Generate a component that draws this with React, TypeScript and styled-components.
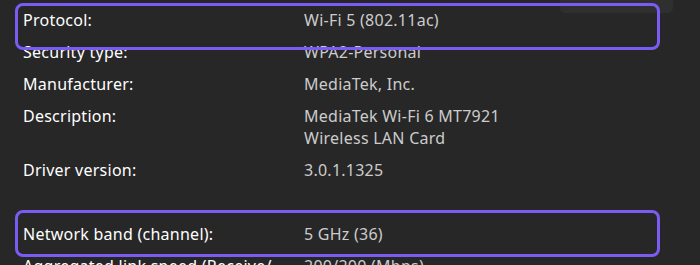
import React from "react";
import styled, { createGlobalStyle } from "styled-components";

const GlobalStyle = createGlobalStyle`
  html, body {
    margin: 0;
    padding: 0;
    background: #272727;
  }
  body {
    width: 700px;
    height: 265px;
    overflow: hidden;
    font-family: "Noto Sans", "Open Sans", sans-serif;
    -webkit-font-smoothing: antialiased;
  }
`;

const Page = styled.div`
  position: relative;
  width: 700px;
  height: 265px;
  overflow: hidden;
  background: #272727;
`;

const TopBar = styled.div`
  display: flex;
  justify-content: flex-end;
  align-items: flex-end;
  height: 13px;
  padding-right: 27px;
`;

const CopyButton = styled.button`
  flex-shrink: 0;
  width: 113px;
  height: 34px;
  border: none;
  border-radius: 5px;
  background: #2f2f2f;
  color: #ffffff;
  font-family: "Noto Sans", "Open Sans", sans-serif;
  font-size: 16px;
  letter-spacing: 0.25px;
  line-height: 22px;
  display: flex;
  align-items: center;
  justify-content: center;
  padding: 0 0 12px 0;
`;

const List = styled.div`
  display: flex;
  flex-direction: column;
  gap: 42px;
  margin-top: -4px;
  padding-left: 23px;
`;

const Group = styled.div`
  display: flex;
  flex-direction: column;
  gap: 10px;
`;

const Row = styled.div`
  display: grid;
  grid-template-columns: 281px 1fr;
  font-size: 16px;
  letter-spacing: 0.25px;
  line-height: 22px;
`;

const Label = styled.span`
  color: #ffffff;
`;

const Value = styled.span`
  color: #cccccc;
  white-space: pre-line;
`;

const Highlight = styled.div<{ $top: number }>`
  position: absolute;
  left: 15px;
  top: ${(p) => p.$top}px;
  width: 645px;
  height: 47px;
  box-sizing: border-box;
  border: 3px solid #7a5cf2;
  border-radius: 8px;
  pointer-events: none;
`;

type Item = { label: string; value: string };

const groupA: Item[] = [
  { label: "Protocol:", value: "Wi-Fi 5 (802.11ac)" },
  { label: "Security type:", value: "WPA2-Personal" },
  { label: "Manufacturer:", value: "MediaTek, Inc." },
  { label: "Description:", value: "MediaTek Wi-Fi 6 MT7921\nWireless LAN Card" },
  { label: "Driver version:", value: "3.0.1.1325" },
];

const groupB: Item[] = [
  { label: "Network band (channel):", value: "5 GHz (36)" },
  { label: "Aggregated link speed (Receive/", value: "200/200 (Mbps)" },
];

export default function App() {
  return (
    <Page>
      <GlobalStyle />
      <TopBar>
        <CopyButton>Copy</CopyButton>
      </TopBar>
      <List>
        <Group>
          {groupA.map((it) => (
            <Row key={it.label}>
              <Label>{it.label}</Label>
              <Value>{it.value}</Value>
            </Row>
          ))}
        </Group>
        <Group>
          {groupB.map((it) => (
            <Row key={it.label}>
              <Label>{it.label}</Label>
              <Value>{it.value}</Value>
            </Row>
          ))}
        </Group>
      </List>
      <Highlight $top={3} />
      <Highlight $top={210} />
    </Page>
  );
}
